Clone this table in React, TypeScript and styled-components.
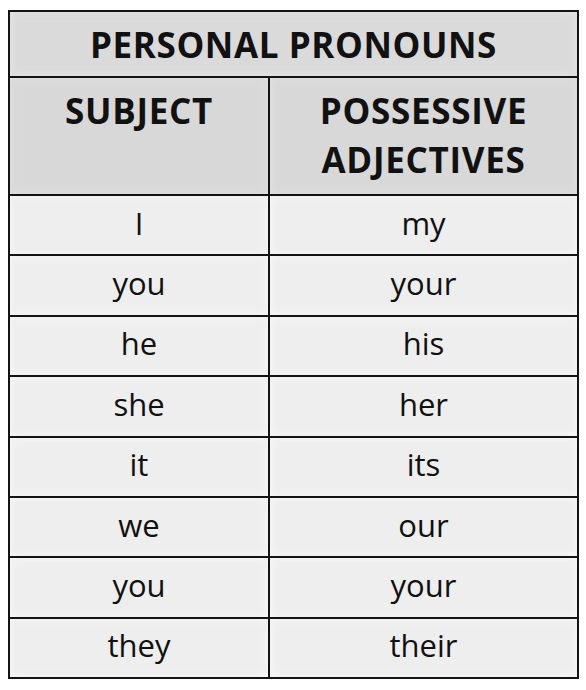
import React from 'react';
import styled, { createGlobalStyle } from 'styled-components';

const GlobalStyle = createGlobalStyle`
    html, body {
        margin: 0;
        padding: 0;
        background: #ffffff;
    }
    body {
        font-family: "Open Sans", Lato, "Liberation Sans", sans-serif;
        color: #111111;
    }
`;

const Page = styled.div`
    padding: 10px 0 0 8px;
`;

const Table = styled.div`
    width: 571px;
    box-sizing: border-box;
    border: 2px solid #141414;
    display: flex;
    flex-direction: column;
`;

const Title = styled.div`
    height: 64px;
    border-bottom: 2px solid #141414;
    background: #dadada;
    box-shadow: inset 0 0 10px #e6e6e6;
    display: flex;
    align-items: center;
    justify-content: center;
    font-weight: 700;
    font-size: 35px;
    letter-spacing: 0.6px;
`;

const Row = styled.div<{ $h: number }>`
    display: grid;
    grid-template-columns: 258px 1fr;
    height: ${(p) => p.$h}px;
    border-bottom: 2px solid #141414;
    &:last-child {
        border-bottom: none;
    }
`;

const Cell = styled.div<{ $head?: boolean }>`
    display: flex;
    align-items: ${(p) => (p.$head ? 'flex-start' : 'center')};
    justify-content: center;
    text-align: center;
    background: ${(p) => (p.$head ? '#d8d8d8' : '#eeeeee')};
    box-shadow: inset 0 0 8px ${(p) => (p.$head ? '#e2e2e2' : '#f9f9f9')};
    font-size: ${(p) => (p.$head ? '35px' : '31px')};
    font-weight: ${(p) => (p.$head ? 700 : 400)};
    letter-spacing: ${(p) => (p.$head ? '0.7px' : '0')};
    line-height: ${(p) => (p.$head ? '49px' : '1')};
    padding-top: ${(p) => (p.$head ? '8px' : '0')};
    padding-bottom: ${(p) => (p.$head ? '0' : '4px')};
    box-sizing: border-box;
    & + & {
        border-left: 2px solid #141414;
    }
`;

const rows = [
    ['I', 'my'],
    ['you', 'your'],
    ['he', 'his'],
    ['she', 'her'],
    ['it', 'its'],
    ['we', 'our'],
    ['you', 'your'],
    ['they', 'their'],
];

const App = () => {
    return (
        <>
            <GlobalStyle />
            <Page>
                <Table>
                    <Title>PERSONAL PRONOUNS</Title>
                    <Row $h={116}>
                        <Cell $head>SUBJECT</Cell>
                        <Cell $head>POSSESSIVE<br />ADJECTIVES</Cell>
                    </Row>
                    {rows.map((r, i) => (
                        <Row key={i} $h={58.4}>
                            <Cell>{r[0]}</Cell>
                            <Cell>{r[1]}</Cell>
                        </Row>
                    ))}
                </Table>
            </Page>
        </>
    );
};

export default App;
